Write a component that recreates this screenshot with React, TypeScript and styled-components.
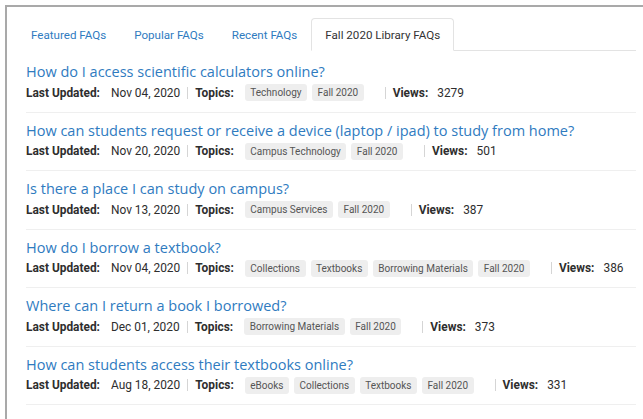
import * as React from 'react'
import styled, { createGlobalStyle } from 'styled-components'

interface Faq {
  title: string;
  updated: string;
  topics: string[];
  views: number;
}

const faqs: Faq[] = [
  { title: 'How do I access scientific calculators online?', updated: 'Nov 04, 2020', topics: ['Technology', 'Fall 2020'], views: 3279 },
  { title: 'How can students request or receive a device (laptop / ipad) to study from home?', updated: 'Nov 20, 2020', topics: ['Campus Technology', 'Fall 2020'], views: 501 },
  { title: 'Is there a place I can study on campus?', updated: 'Nov 13, 2020', topics: ['Campus Services', 'Fall 2020'], views: 387 },
  { title: 'How do I borrow a textbook?', updated: 'Nov 04, 2020', topics: ['Collections', 'Textbooks', 'Borrowing Materials', 'Fall 2020'], views: 386 },
  { title: 'Where can I return a book I borrowed?', updated: 'Dec 01, 2020', topics: ['Borrowing Materials', 'Fall 2020'], views: 373 },
  { title: 'How can students access their textbooks online?', updated: 'Aug 18, 2020', topics: ['eBooks', 'Collections', 'Textbooks', 'Fall 2020'], views: 331 },
]

const tabs = ['Featured FAQs', 'Popular FAQs', 'Recent FAQs', 'Fall 2020 Library FAQs']

const GlobalStyle = createGlobalStyle`
  html, body {
    margin: 0;
    padding: 0;
    background: #fff;
    overflow: hidden;
  }
  body {
    font-family: Roboto, 'Liberation Sans', sans-serif;
    color: #333;
  }
`

const Frame = styled.div`
  margin: 5px 0 0 5px;
  height: 420px;
  border-top: 2px solid #a9a9a9;
  border-left: 2px solid #a9a9a9;
  padding: 11px 7px 0 16px;
`

const TabList = styled.ul`
  display: flex;
  list-style: none;
  margin: 0;
  padding: 0;
  border-bottom: 1px solid #e3e3e3;
`

const Tab = styled.li<{ active?: boolean }>`
  height: 31px;
  display: flex;
  align-items: center;
  padding: 0 13px;
  margin-bottom: -1px;
  font-size: 11.6px;
  white-space: nowrap;
  color: ${(props) => (props.active ? '#333' : '#2f7bbf')};
  background: #fff;
  border: 1px solid ${(props) => (props.active ? '#e3e3e3' : 'transparent')};
  border-bottom-color: ${(props) => (props.active ? '#fff' : 'transparent')};
  border-radius: 4px 4px 0 0;

  &:first-child {
    padding-left: 7px;
  }
`

const List = styled.div`
  margin: 3px 0 0 3px;
`

const Item = styled.div`
  padding: 8px 0 8.5px;
  border-bottom: 1px solid #efefef;
`

const Title = styled.a`
  display: block;
  line-height: 20px;
  font-family: 'Open Sans', sans-serif;
  font-size: 14.5px;
  color: #2f7bbf;
  text-decoration: none;
  white-space: nowrap;
`

const Meta = styled.div`
  display: flex;
  align-items: center;
  height: 21px;
  font-size: 11.9px;
  color: #2e2e2e;
  white-space: nowrap;
`

const Label = styled.span<{ gap?: number }>`
  font-weight: bold;
  margin-right: ${(props) => props.gap ?? 11}px;
`

const Value = styled.span``

const Divider = styled.span<{ wide?: boolean }>`
  flex-shrink: 0;
  width: 1px;
  height: 12px;
  background: #d5d5d5;
  margin: 0 7px 0 ${(props) => (props.wide ? '21px' : '7px')};
`

const Tags = styled.span`
  display: flex;
  gap: 5px;
`

const Tag = styled.span`
  display: inline-flex;
  align-items: center;
  height: 17px;
  padding: 0 5.5px;
  border-radius: 3px;
  background: #eeeeee;
  color: #555;
  font-size: 10px;
`

const App: React.FunctionComponent = () => {
  return (
    <>
      <GlobalStyle />
      <Frame>
        <TabList>
          {tabs.map((t, i) => (
            <Tab key={t} active={i === tabs.length - 1}>{t}</Tab>
          ))}
        </TabList>
        <List>
          {faqs.map((faq) => (
            <Item key={faq.title}>
              <Title href="#">{faq.title}</Title>
              <Meta>
                <Label>Last Updated:</Label>
                <Value>{faq.updated}</Value>
                <Divider />
                <Label>Topics:</Label>
                <Tags>
                  {faq.topics.map((topic) => (
                    <Tag key={topic}>{topic}</Tag>
                  ))}
                </Tags>
                <Divider wide />
                <Label gap={9}>Views:</Label>
                <Value>{faq.views}</Value>
              </Meta>
            </Item>
          ))}
        </List>
      </Frame>
    </>
  )
}

export default App
